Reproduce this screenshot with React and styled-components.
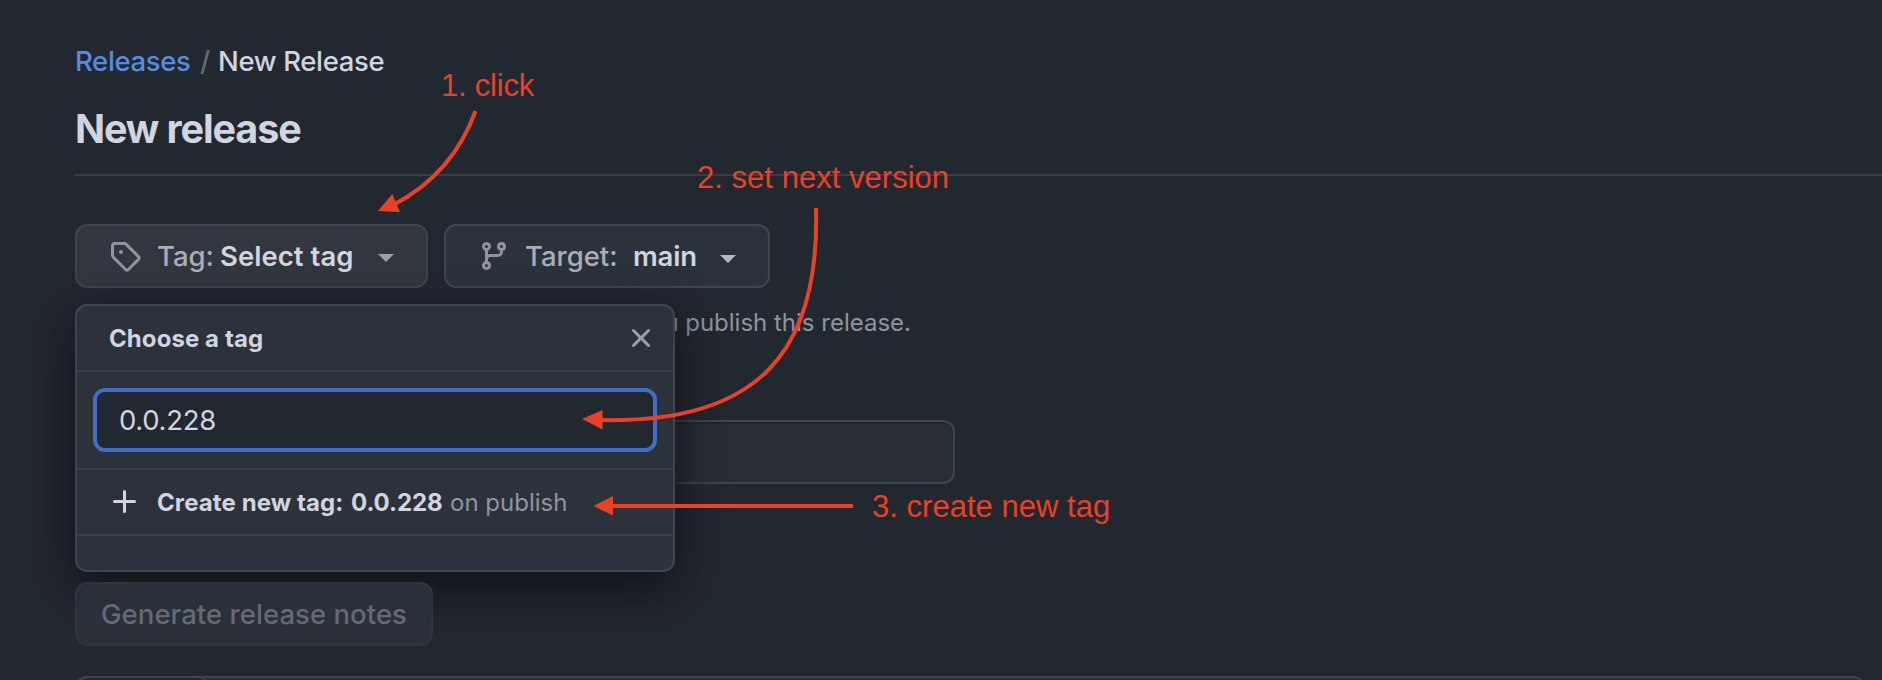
import React from "react";
import styled, { createGlobalStyle } from "styled-components";

const GlobalStyle = createGlobalStyle`
  * { box-sizing: border-box; }
  html, body { margin: 0; background: #22282f; }
  body { overflow: hidden; font-family: Inter, "Liberation Sans", sans-serif; color: #d1d5e0; }
`;

const Page = styled.main`
  position: relative;
  width: 1882px;
  height: 680px;
  overflow: hidden;
  padding: 40px 0 0 75px;
  background: #22282f;
`;

const Breadcrumb = styled.nav`
  display: flex;
  height: 42px;
  line-height: 42px;
  font-size: 27.5px;
  white-space: pre;
`;

const Crumb = styled.span`
  width: ${(p) => p.$width}px;
  letter-spacing: ${(p) => p.$track || 0}px;
  color: ${(p) => p.$color || "#d1d5e0"};
  font-weight: 450;
`;

const Title = styled.h1`
  margin: 16px 0 0;
  height: 78px;
  border-bottom: 2px solid #373c45;
  font-size: 39.5px;
  line-height: 62px;
  font-weight: 680;
  letter-spacing: -1.12px;
`;

const Toolbar = styled.div`
  position: relative;
  display: flex;
  gap: 16px;
  margin-top: 48px;
`;

const Button = styled.button`
  display: flex;
  align-items: center;
  width: ${(p) => p.$width}px;
  height: 64px;
  padding: 0 0 0 ${(p) => p.$pad}px;
  border: 2px solid ${(p) => (p.$muted ? "#2f343d" : "#40444e")};
  border-radius: 12px;
  background: ${(p) => (p.$muted ? "rgba(44, 50, 59, 0.88)" : p.$active ? "#32373f" : "#2c323b")};
  color: ${(p) => (p.$muted ? "#646974" : "#d1d5e0")};
  font-family: inherit;
  font-size: 27.5px;
  font-weight: 540;
  letter-spacing: ${(p) => p.$track || 0}px;
  white-space: nowrap;
  text-align: left;
`;

const ButtonText = styled.span`
  width: ${(p) => p.$width}px;
  flex: none;
  color: ${(p) => (p.$dim ? "#aaaeb9" : "#d1d5e0")};
  font-weight: ${(p) => (p.$dim ? 540 : 620)};
  letter-spacing: ${(p) => p.$track || 0}px;
`;

const Caret = styled.span`
  border: 8px solid transparent;
  border-top-color: ${(p) => p.$color};
  border-bottom: 0;
  margin-top: ${(p) => p.$drop}px;
`;

const IconBox = styled.svg`
  flex: none;
  width: 32px;
  height: 32px;
  fill: ${(p) => p.$color || "#8f949f"};
  margin-right: ${(p) => p.$gap || 0}px;
`;

const Popover = styled.section`
  position: absolute;
  top: 80px;
  left: 0;
  z-index: 1;
  width: 600px;
  height: 268px;
  border: 2px solid #40444e;
  border-radius: 12px;
  background: #2c323b;
  box-shadow: 0 16px 48px rgba(13, 15, 20, 0.9);
`;

const PopoverHeader = styled.header`
  display: flex;
  align-items: center;
  justify-content: space-between;
  height: 66px;
  padding: 0 16px 0 32px;
  border-bottom: 2px solid #3a3e48;
  font-size: 24px;
  font-weight: 670;
  letter-spacing: 0.08px;
`;

const FilterArea = styled.div`
  height: 98px;
  padding: 16px;
  border-bottom: 2px solid #3a3e48;
`;

const FilterInput = styled.input`
  display: block;
  width: 564px;
  height: 64px;
  padding: 0 0 0 22px;
  border: 4px solid #426dc4;
  border-radius: 12px;
  outline: none;
  background: #22282f;
  color: #d1d5e0;
  font-family: inherit;
  font-size: 27.5px;
  font-weight: 430;
  letter-spacing: -0.3px;
`;

const CreateRow = styled.div`
  display: flex;
  align-items: center;
  height: 66px;
  padding-left: 32px;
  border-bottom: 2px solid #3a3e48;
  font-size: 24px;
  white-space: nowrap;
`;

const RowText = styled.span`
  width: ${(p) => p.$width}px;
  letter-spacing: ${(p) => p.$track || 0}px;
  color: ${(p) => (p.$dim ? "#8f949f" : "#d1d5e0")};
  font-weight: ${(p) => (p.$dim ? 430 : 670)};
`;

const Hint = styled.p`
  width: 836px;
  height: 36px;
  margin: 16px 0 0;
  color: #8f949f;
  font-size: 24px;
  font-weight: 430;
  line-height: 38px;
  text-align: right;
  white-space: nowrap;
`;

const HintLead = styled.span`
  letter-spacing: -0.2px;
`;

const TitleField = styled.div`
  width: 880px;
  height: 64px;
  margin-top: 80px;
  border: 2px solid #40444e;
  border-radius: 12px;
  background: #292d35;
  box-shadow: inset 0 2px 0 #22252d;
`;

const NotesRow = styled.div`
  position: relative;
  z-index: 2;
  margin-top: 98px;
`;

const Editor = styled.div`
  width: 1790px;
  height: 120px;
  margin-top: 30px;
  border: 2px solid #40444e;
  border-radius: 12px;
  background: #282d36;
`;

const EditorTab = styled.div`
  width: 134px;
  height: 60px;
  margin: -2px 0 0 -1px;
  border: 2px solid #40444e;
  border-radius: 12px 12px 0 0;
  background: #22282f;
`;

const Annotations = styled.div`
  position: absolute;
  inset: 0;
  z-index: 3;
  pointer-events: none;
`;

const Arrows = styled.svg`
  position: absolute;
  inset: 0;
`;

const Note = styled.span`
  position: absolute;
  left: ${(p) => p.$x}px;
  top: ${(p) => p.$y}px;
  color: #ea4025;
  font: 31px/36px "Liberation Sans", Arial, sans-serif;
  letter-spacing: ${(p) => p.$track || 0}px;
  white-space: nowrap;
`;

const paths = {
  tag: "M1 7.775V2.75C1 1.784 1.784 1 2.75 1h5.025c.464 0 .91.184 1.238.513l6.25 6.25a1.75 1.75 0 0 1 0 2.474l-5.026 5.026a1.75 1.75 0 0 1-2.474 0l-6.25-6.25A1.752 1.752 0 0 1 1 7.775Zm1.5 0c0 .066.026.13.073.177l6.25 6.25a.25.25 0 0 0 .354 0l5.025-5.025a.25.25 0 0 0 0-.354l-6.25-6.25a.25.25 0 0 0-.177-.073H2.75a.25.25 0 0 0-.25.25ZM6 5a1 1 0 1 1 0 2 1 1 0 0 1 0-2Z",
  branch:
    "M9.5 3.25a2.25 2.25 0 1 1 3 2.122V6A2.5 2.5 0 0 1 10 8.5H6a1 1 0 0 0-1 1v1.128a2.251 2.251 0 1 1-1.5 0V5.372a2.25 2.25 0 1 1 1.5 0v1.836A2.493 2.493 0 0 1 6 7h4a1 1 0 0 0 1-1v-.628A2.25 2.25 0 0 1 9.5 3.25Zm-6 0a.75.75 0 1 0 1.5 0 .75.75 0 0 0-1.5 0Zm8.25-.75a.75.75 0 1 0 0 1.5.75.75 0 0 0 0-1.5ZM4.25 12a.75.75 0 1 0 0 1.5.75.75 0 0 0 0-1.5Z",
  close:
    "M3.72 3.72a.75.75 0 0 1 1.06 0L8 6.94l3.22-3.22a.749.749 0 0 1 1.275.326.749.749 0 0 1-.215.734L9.06 8l3.22 3.22a.749.749 0 0 1-.326 1.275.749.749 0 0 1-.734-.215L8 9.06l-3.22 3.22a.751.751 0 0 1-1.042-.018.751.751 0 0 1-.018-1.042L6.94 8 3.72 4.78a.75.75 0 0 1 0-1.06Z",
  plus: "M7.75 2a.75.75 0 0 1 .75.75V7h4.25a.75.75 0 0 1 0 1.5H8.5v4.25a.75.75 0 0 1-1.5 0V8.5H2.75a.75.75 0 0 1 0-1.5H7V2.75A.75.75 0 0 1 7.75 2Z",
};

const Icon = ({ name, color, gap }) => (
  <IconBox viewBox="0 0 16 16" $color={color} $gap={gap} aria-hidden="true">
    <path d={paths[name]} />
  </IconBox>
);

export default function App() {
  return (
    <>
      <GlobalStyle />
      <Page>
        <Breadcrumb>
          <Crumb $width={125} $color="#588be0" $track={-0.35}>Releases</Crumb>
          <Crumb $width={18} $color="#646974">/</Crumb>
          <Crumb $width={180} $track={-0.35}>New Release</Crumb>
        </Breadcrumb>
        <Title>New release</Title>
        <Toolbar>
          <Button $width={353} $pad={32} $active>
            <Icon name="tag" gap={16} />
            <ButtonText $width={63} $dim>Tag:</ButtonText>
            <ButtonText $width={158} $track={0.05}>Select tag</ButtonText>
            <Caret $color="#9a9faa" $drop={4} />
          </Button>
          <Button $width={326} $pad={32}>
            <Icon name="branch" gap={15} />
            <ButtonText $width={108} $dim>Target:</ButtonText>
            <ButtonText $width={87} $track={-0.2}>main</ButtonText>
            <Caret $color="#b4b8c3" $drop={6} />
          </Button>
          <Popover>
            <PopoverHeader>
              Choose a tag
              <Icon name="close" color="#9a9faa" />
            </PopoverHeader>
            <FilterArea>
              <FilterInput defaultValue="0.0.228" />
            </FilterArea>
            <CreateRow>
              <Icon name="plus" color="#d1d5e0" gap={16} />
              <RowText $width={194} $track={0.1}>Create new tag:</RowText>
              <RowText $width={99} $track={-0.1}>0.0.228</RowText>
              <RowText $width={120} $dim>on publish</RowText>
            </CreateRow>
          </Popover>
        </Toolbar>
        <Hint>
          <HintLead>Choose an existing tag, or create a new tag when you</HintLead> publish this release.
        </Hint>
        <TitleField />
        <NotesRow>
          <Button $width={358} $pad={24} $track={0.05} $muted>Generate release notes</Button>
        </NotesRow>
        <Editor>
          <EditorTab />
        </Editor>
        <Annotations>
          <Arrows width="1882" height="680" fill="none" stroke="#ea4025" strokeWidth="4">
            <path d="M475.5 111Q453 173 395 204" />
            <path d="M378 211L392.3 194L400 212Z" fill="#ea4025" stroke="none" />
            <path d="M816 208C820 350 760 424 600 420" />
            <path d="M582 419L602.5 410V429.5Z" fill="#ea4025" stroke="none" />
            <path d="M612 506H853" />
            <path d="M593.5 506L613 496V515.5Z" fill="#ea4025" stroke="none" />
          </Arrows>
          <Note $x={441} $y={68} $track={-0.22}>1. click</Note>
          <Note $x={697} $y={160} $track={0.03}>2. set next version</Note>
          <Note $x={872} $y={489} $track={0.02}>3. create new tag</Note>
        </Annotations>
      </Page>
    </>
  );
}
